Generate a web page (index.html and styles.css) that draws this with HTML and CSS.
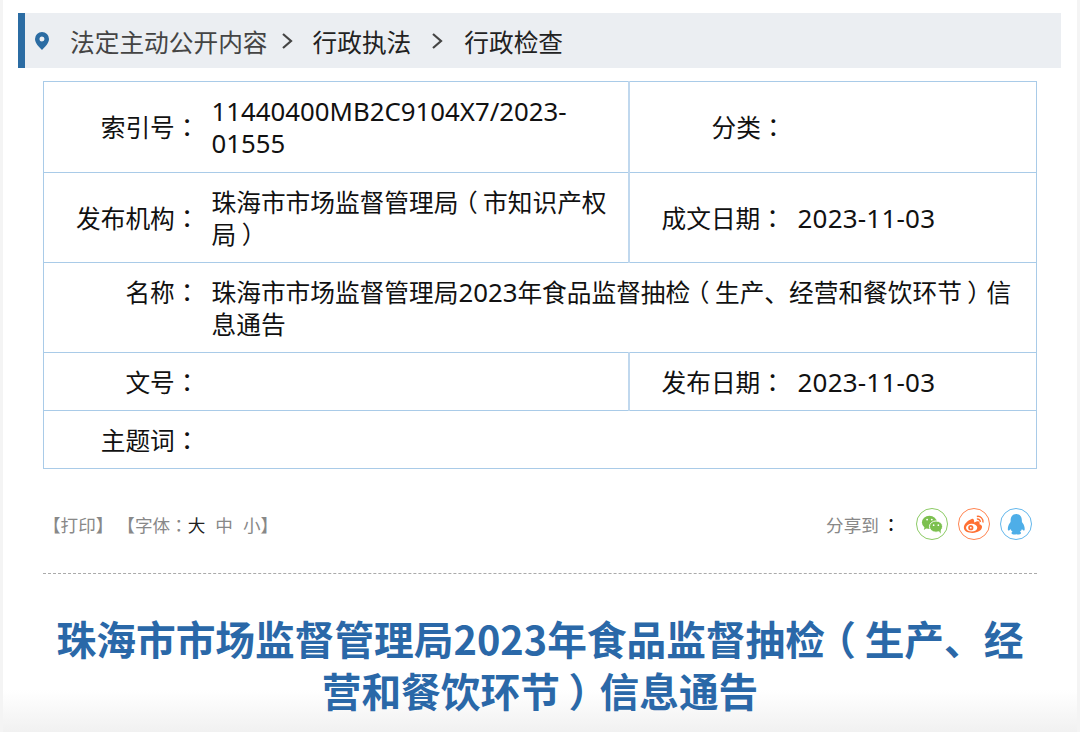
FILE: index.html
```html
<!DOCTYPE html>
<html lang="zh-CN">

<head>
    <meta charset="utf-8">
    <title>信息通告</title>
    <link rel="stylesheet" href="styles.css">
</head>

<body>
    <div class="crumb">
        <svg class="pin" width="14" height="18" viewBox="0 0 14 18">
            <path fill="#2b6ca3" fill-rule="evenodd" d="M7 0a7 7 0 0 1 7 7c0 4-4 8-7 11C4 15 0 11 0 7a7 7 0 0 1 7-7zm0 4.500a2.500 2.500 0 1 0 0 5 2.500 2.500 0 0 0 0-5z"/>
        </svg>
        <span class="crumb_first">法定主动公开内容</span>
        <svg class="arrow arrow_a" width="12" height="18" viewBox="0 0 12 18"><path d="M2 2l8 7-8 7" fill="none" stroke="#444" stroke-width="2.200"/></svg>
        <span>行政执法</span>
        <svg class="arrow arrow_b" width="12" height="18" viewBox="0 0 12 18"><path d="M2 2l8 7-8 7" fill="none" stroke="#444" stroke-width="2.200"/></svg>
        <span>行政检查</span>
    </div>

    <table class="info">
        <colgroup>
            <col class="col_label">
            <col class="col_value">
            <col class="col_label2">
            <col>
        </colgroup>
        <tr class="first">
            <th>索引号<span class="colon" lang="zh-TW">：</span></th>
            <td><span class="num">11440400MB2C9104X7/2023-01555</span></td>
            <th class="right_label cat">分类<span class="colon" lang="zh-TW">：</span></th>
            <td></td>
        </tr>
        <tr class="tall">
            <th>发布机构<span class="colon" lang="zh-TW">：</span></th>
            <td>珠海市市场监督管理局<span class="open">（</span>市知识产权局<span class="close">）</span></td>
            <th class="right_label">成文日期<span class="colon" lang="zh-TW">：</span></th>
            <td class="date"><span class="num">2023-11-03</span></td>
        </tr>
        <tr class="tall top">
            <th>名称<span class="colon" lang="zh-TW">：</span></th>
            <td colspan="3">珠海市市场监督管理局<span class="num">2023</span>年食品监督抽检<span class="open">（</span>生产、经营和餐饮环节<span class="close">）</span>信息通告</td>
        </tr>
        <tr class="short">
            <th>文号<span class="colon" lang="zh-TW">：</span></th>
            <td></td>
            <th class="right_label">发布日期<span class="colon" lang="zh-TW">：</span></th>
            <td class="date"><span class="num">2023-11-03</span></td>
        </tr>
        <tr class="short">
            <th>主题词<span class="colon" lang="zh-TW">：</span></th>
            <td colspan="3"></td>
        </tr>
    </table>

    <div class="tools">
        <div class="print">【打印】 【字体<span class="colon" lang="zh-TW">：</span><b>大</b><i>中</i><i>小</i>】</div>
        <div class="share">
            <span>分享到</span><em>:</em>
            <span class="icon wx">
                <svg width="24" height="20" viewBox="0 0 24 20">
                    <ellipse cx="9" cy="8" rx="8" ry="7" fill="#7cc04f"/>
                    <path d="M4 12l-1 4 5-3z" fill="#7cc04f"/>
                    <ellipse cx="16" cy="12.500" rx="7" ry="6" fill="#7cc04f" stroke="#fff"/>
                    <path d="M19 17l2 3 0-5z" fill="#7cc04f"/>
                    <circle cx="6.500" cy="5" r="1" fill="#fff"/>
                    <circle cx="11.500" cy="5" r="1" fill="#fff"/>
                    <circle cx="13.500" cy="11" r="0.900" fill="#fff"/>
                    <circle cx="18.500" cy="11" r="0.900" fill="#fff"/>
                </svg>
            </span>
            <span class="icon wb">
                <svg width="26" height="22" viewBox="0 0 26 22">
                    <path d="M10 5C5 7 1 11 1 15c0 4 5 6 10 6 6 0 11-3 11-7 0-2-2-3-3-3 1-3-1-4-4-3l-2 1c0-3-1-5-3-4z" fill="#ff7033"/>
                    <ellipse cx="10" cy="15" rx="6.500" ry="4.500" fill="#fff"/>
                    <circle cx="9" cy="15" r="3" fill="#ff7033"/>
                    <circle cx="9" cy="15" r="1" fill="#fff"/>
                    <path d="M16 2c4-1 8 3 7 7M16 5c2-.5 4 1 4 3.500" fill="none" stroke="#ff7033" stroke-width="1.600"/>
                </svg>
            </span>
            <span class="icon qq">
                <svg width="22" height="24" viewBox="0 0 22 24">
                    <path d="M11 1c4 0 6 3 6 7 0 1 0 2 1 3s2 4 2 6-1 2-2 1l-1-1c0 1-1 2-2 3 2 1 1 3-1 3-2 0-3 0-3-1 0 1-1 1-3 1s-3-2-1-3c-1-1-2-2-2-3l-1 1c-1 1-2 1-2-1s1-5 2-6 1-2 1-3c0-4 2-7 6-7z" fill="#4eaee8"/>
                </svg>
            </span>
        </div>
    </div>

    <h1 class="title">珠海市市场监督管理局2023年食品监督抽检<span class="open">（</span>生产、经营和餐饮环节<span class="close">）</span>信息通告</h1>
</body>

</html>
```

FILE: styles.css
```css
html,
body {
    margin: 0;
    height: 732px;
    overflow: hidden;
}

body {
    padding: 13px 16px 0 15px;
    box-sizing: border-box;
    border-left: 3px solid #f4f4f4;
    border-right: 3px solid #f4f4f4;
    background: linear-gradient(#fff 690px, #f1f1f1 732px);
    font-family: "Noto Sans CJK SC", "Noto Sans", sans-serif;
    color: #222;
}

.crumb {
    display: flex;
    align-items: center;
    height: 55px;
    border-left: 7px solid #2b6ca3;
    background: #ebeef2;
    font-size: 24.700px;
    color: #222;
}

.pin {
    margin-left: 10px;
    margin-right: 21px;
}

.crumb_first {
    color: #444;
}

.arrow_a {
    margin: 0 20px 0 13px;
}

.arrow_b {
    margin: 0 21px 0 20px;
}

.colon {
    display: inline-block;
    line-height: 1;
    font-family: "Noto Sans CJK TC", sans-serif;
}

/* brackets sit in the middle of their square in the original */
.open,
.close {
    display: inline-block;
    line-height: 1;
}

.open {
    margin: 0 0.220em 0 -0.220em;
}

.close {
    margin: 0 -0.220em 0 0.220em;
}

.num {
    font-family: "Noto Sans", sans-serif;
    font-size: 25.800px;
    line-height: 1;
}

.info {
    width: 994px;
    margin: 13px 0 0 25px;
    border-collapse: collapse;
    border: 1px solid #a9cbe8;
    table-layout: fixed;
    font-size: 24.700px;
    line-height: 32px;
    color: #111;
}

.col_label {
    width: 160px;
}

.col_value {
    width: 425px;
}

.col_label2 {
    width: 160px;
}

.info tr {
    border-bottom: 1px solid #a9cbe8;
}

.info th {
    font-weight: 400;
    text-align: right;
    white-space: nowrap;
    padding: 0 4px 2px 0;
}

.info td {
    padding: 0 20px 2px 8px;
}

.info .date {
    padding-left: 9px;
}

.date .num {
    font-size: 26px;
    letter-spacing: 0.200px;
}

.first {
    height: 91px;
}

.tall {
    height: 90px;
}

.short {
    height: 58px;
}

.info .top th,
.info .top td {
    vertical-align: top;
    padding-top: 12px;
}

.info .right_label {
    text-align: left;
    padding-left: 32px;
    border-left: 2px solid #c0d8ee;
}

.info .cat {
    padding-left: 82px;
}

.tools {
    display: flex;
    justify-content: space-between;
    align-items: center;
    margin-left: 25px;
    width: 994px;
    height: 105px;
    border-bottom: 1px dashed #aaa;
    box-sizing: border-box;
    padding: 6px 5px 0 0;
}

.print {
    font-size: 17.600px;
    color: #888;
}

.print b {
    font-weight: 400;
    color: #222;
    margin-right: 10px;
}

.print i {
    font-style: normal;
    margin-right: 10px;
}

.print i:last-child {
    margin-right: 0;
}

.share {
    display: flex;
    align-items: center;
    font-size: 17.600px;
    color: #888;
}

.share em {
    font-style: normal;
    color: #111;
    font-size: 22px;
    margin: -6px 22px 0 9px;
}

.icon {
    display: flex;
    align-items: center;
    justify-content: center;
    width: 32px;
    height: 32px;
    border-radius: 50%;
    border: 1.500px solid;
    margin-left: 10px;
    box-sizing: border-box;
}

.icon svg {
    width: 75%;
    height: 75%;
}

.wx {
    border-color: #8ccb65;
    margin-left: 0;
}

.wb {
    border-color: #ff8450;
}

.qq {
    border-color: #63b7ec;
}

.title {
    margin: 38px 0 0 25px;
    width: 994px;
    text-align: center;
    font-size: 39.700px;
    line-height: 52px;
    font-weight: 700;
    color: #2a68a8;
}
```
